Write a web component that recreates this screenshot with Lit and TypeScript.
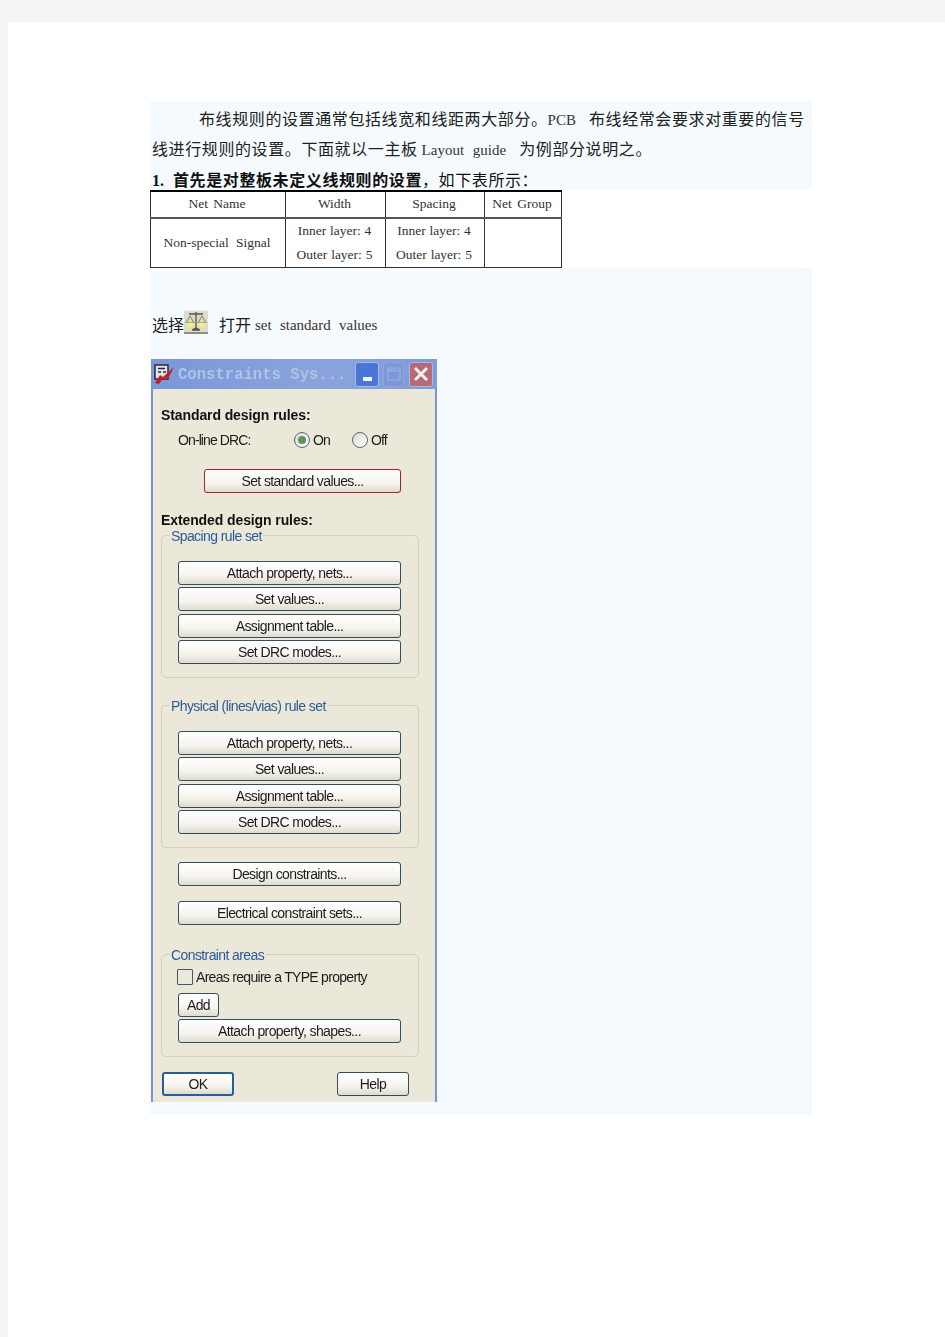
import { LitElement, html, css, svg } from "lit";
import { customElement } from "lit/decorators.js";

const ruleButtons = ["Attach property, nets...", "Set values...", "Assignment table...", "Set DRC modes..."];

@customElement("app-root")
export class AppRoot extends LitElement {
  static styles = css`
    :host { display: block; background: #f4f4f4; height: 1337px; padding: 22px 0 0 8px; box-sizing: border-box; overflow: hidden; }
    * { box-sizing: border-box; }
    .sheet { background: #fff; height: 1315px; padding: 79px 0 0 142px; font-family: "Liberation Serif", "Noto Sans CJK SC", serif; color: #222; }
    .blue { background: #f5faff; width: 662px; }
    .intro { height: 89px; padding: 4px 2px 0; }
    .line { height: 30px; line-height: 30px; font-size: 16px; letter-spacing: .6px; white-space: nowrap; }
    .line.first { padding-left: 47px; }
    .lat { font-size: 15px; letter-spacing: 0; word-spacing: 5px; color: #3a3230; }
    .gap-l { margin-left: 13px; }
    .lead { margin-left: 4px; }
    .heading { font-weight: 700; height: 29px; line-height: 31px; color: #111; }
    .heading b { display: inline-block; width: 21px; font-size: 16px; letter-spacing: 0; }
    .heading span { font-weight: 400; }
    table { border-collapse: collapse; width: 411px; height: 78px; table-layout: fixed; font-size: 13.5px; word-spacing: 2px; color: #333; border-top: 2px solid #000; }
    td { border: 1px solid #333; text-align: center; padding: 0; line-height: 24px; }
    tr.head { height: 25px; }
    tr.head td { border-bottom: 2px solid #555; padding: 0 2px 1px 0; }
    td.name { padding-right: 2px; word-spacing: 4px; }
    td.two { word-spacing: .5px; padding-right: 2px; }
    .after { height: 847px; padding: 42px 0 0 1px; }
    .choose { height: 49px; display: flex; align-items: flex-start; font-size: 16px; line-height: 31px; padding-left: 1px; }
    .choose svg { display: block; }
    .choose .open { margin-left: 11px; }
    .choose .lat { font-size: 15px; margin-left: 4px; word-spacing: 4.5px; }
    .dialog { width: 286px; height: 743px; background: #ebe8da; border-left: 2px solid #7b93cf; border-right: 2px solid #7b93cf; font-family: "Liberation Sans", sans-serif; color: #1c1c1c; filter: blur(.35px); }
    .title { height: 30px; margin: 0 -2px; background: linear-gradient(90deg, #7a97d8, #8aa3dc 60%, #7f9bd8); display: flex; align-items: center; padding-left: 3px; }
    .title .name { font-family: "Liberation Mono", monospace; font-size: 15.6px; line-height: 20px; padding-top: 1px; font-weight: 700; color: #afc3e6; margin-left: 3px; width: 177px; white-space: nowrap; }
    .wbtn { height: 25px; border-radius: 3px; border: 1px solid #a6b9e4; display: flex; align-items: center; justify-content: center; }
    .wbtn.min { width: 24px; background: #4a76d8; align-items: flex-end; padding-bottom: 5px; margin-right: 4px; }
    .wbtn.min i { display: block; width: 9px; height: 4px; background: #f4f6fb; }
    .wbtn.max { width: 21px; background: #7d97d8; border-color: #8ea5dd; margin-right: 5px; }
    .wbtn.close { width: 24px; background: #b56a76; }
    .body { padding: 17px 16px 0 8px; }
    h3 { margin: 0; font-size: 14px; line-height: 18px; font-weight: 700; color: #111; letter-spacing: -.1px; }
    .drc { display: flex; align-items: center; height: 18px; margin: 7px 0 0 17px; font-size: 14px; letter-spacing: -.9px; }
    .drc .lbl { width: 116px; }
    .radio { width: 16px; height: 16px; border-radius: 50%; border: 1.5px solid #4d6a83; background: linear-gradient(135deg, #dcd9cc, #fff); margin-right: 3px; display: flex; align-items: center; justify-content: center; }
    .radio i { width: 8px; height: 8px; border-radius: 50%; background: #5f9161; }
    .off { margin-left: 19px; }
    .opt { width: 20px; }
    button { display: block; height: 24px; padding: 0; border: 1.5px solid #31505f; border-radius: 3px; background: linear-gradient(#fff, #f6f4ee 60%, #dedbcf); font: 14px "Liberation Sans", sans-serif; letter-spacing: -.6px; color: #1c1c1c; white-space: nowrap; }
    button.std { width: 197px; margin: 20px 0 0 43px; border-color: #a8242e; box-shadow: 0 0 1px #e8a0a0; }
    button.wide { width: 223px; margin-left: 17px; }
    h3.ext { margin-top: 18px; }
    .group { position: relative; margin-top: 6px; height: 143px; border: 1px solid #d3d0c0; border-radius: 5px; padding-top: 25px; display: flex; flex-direction: column; gap: 2.33px; }
    .group button.wide { margin-left: 16px; }
    .group.second { margin-top: 27px; }
    .group.areas { margin-top: 29px; height: 103px; padding-top: 14px; gap: 0; }
    .legend { position: absolute; left: 8px; top: -8px; padding: 0 1px; background: #ebe8da; color: #2b5c98; font-size: 14px; line-height: 16px; letter-spacing: -.6px; white-space: nowrap; }
    button.design { margin-top: 14px; }
    button.electric { margin-top: 15px; }
    .check { display: flex; align-items: center; height: 16px; margin-left: 15px; font-size: 14px; letter-spacing: -.7px; }
    .box { width: 16px; height: 16px; border: 1.5px solid #3e5a72; border-radius: 1px; margin-right: 3px; background: #ece9dc; }
    button.add { width: 41px; margin: 8px 0 2px 16px; }
    .actions { display: flex; justify-content: space-between; margin: 15px 10px 0 1px; }
    .actions button { width: 72px; }
    .actions .ok { border-color: #2a5f96; border-width: 2px; }
  `;

  private scaleIcon() {
    return svg`<svg width="24" height="24" viewBox="0 0 24 24">
      <rect width="24" height="24" fill="#dedbc6"/>
      <rect y="22" width="24" height="2" fill="#8d8d80"/>
      <rect width="24" height="1" fill="#f2f1e6"/>
      <path d="M2 13L6 6l4 7zM14 13l4-7 4 7z" fill="none" stroke="#6a6a58" stroke-width=".8"/>
      <path d="M5 4h14M12 2v16M8 20l4-2 4 2z" stroke="#55554a" stroke-width="1.3" fill="#55554a"/>
      <path d="M2 13a4 4.5 0 0 0 8 0zM14 13a4 4.5 0 0 0 8 0z" fill="#eef088"/>
    </svg>`;
  }

  private logo() {
    return svg`<svg width="21" height="20" viewBox="0 0 21 20" style="display:block;flex:none">
      <rect x="1" y="1" width="13" height="14" fill="#e4e4ec" stroke="#2a2a36" stroke-width="1.5"/>
      <path d="M4 4.5h7M4 8h3M9 8h3" stroke="#2a2a36" stroke-width="1.5"/>
      <path d="M1 19l5-8 3 2 11-10-6 12-5-1-4 6z" fill="#c41e28"/>
    </svg>`;
  }

  private group(title: string, cls = "") {
    return html`<div class="group ${cls}">
      <span class="legend">${title}</span>
      ${ruleButtons.map((b) => html`<button class="wide">${b}</button>`)}
    </div>`;
  }

  render() {
    return html`<div class="sheet">
      <div class="blue intro">
        <div class="line first">布线规则的设置通常包括线宽和线距两大部分。<span class="lat">PCB</span><span class="gap-l">布线经常会要求对重要的信号</span></div>
        <div class="line">线进行规则的设置。下面就以一主板<span class="lat lead">Layout guide</span><span class="gap-l">为例部分说明之。</span></div>
        <div class="line heading"><b>1.</b>首先是对整板未定义线规则的设置<span>，如下表所示：</span></div>
      </div>
      <table>
        <colgroup><col style="width:135px"/><col style="width:100px"/><col style="width:99px"/><col style="width:77px"/></colgroup>
        <tr class="head"><td>Net Name</td><td>Width</td><td>Spacing</td><td>Net Group</td></tr>
        <tr><td class="name">Non-special Signal</td><td class="two">Inner layer: 4<br/>Outer layer: 5</td><td class="two">Inner layer: 4<br/>Outer layer: 5</td><td></td></tr>
      </table>
      <div class="blue after">
        <div class="choose">选择${this.scaleIcon()}<span class="open">打开</span><span class="lat">set standard values</span></div>
        <div class="dialog">
          <div class="title">
            ${this.logo()}
            <span class="name">Constraints Sys...</span>
            <span class="wbtn min"><i></i></span>
            <span class="wbtn max"><svg width="14" height="14" viewBox="0 0 14 14"><rect x="1" y="1" width="12" height="12" fill="none" stroke="#96abe0" stroke-width="1.4"/><path d="M1 3.5h12" stroke="#96abe0" stroke-width="2"/></svg></span>
            <span class="wbtn close"><svg width="16" height="16" viewBox="0 0 16 16"><path d="M2 2l12 12M14 2L2 14" stroke="#f6eef0" stroke-width="3"/></svg></span>
          </div>
          <div class="body">
            <h3>Standard design rules:</h3>
            <div class="drc">
              <span class="lbl">On-line DRC:</span>
              <span class="radio"><i></i></span><span class="opt">On</span>
              <span class="radio off"></span><span>Off</span>
            </div>
            <button class="std">Set standard values...</button>
            <h3 class="ext">Extended design rules:</h3>
            ${this.group("Spacing rule set")}
            ${this.group("Physical (lines/vias) rule set", "second")}
            <button class="wide design">Design constraints...</button>
            <button class="wide electric">Electrical constraint sets...</button>
            <div class="group areas">
              <span class="legend">Constraint areas</span>
              <div class="check"><span class="box"></span>Areas require a TYPE property</div>
              <button class="add">Add</button>
              <button class="wide attach">Attach property, shapes...</button>
            </div>
            <div class="actions"><button class="ok">OK</button><button>Help</button></div>
          </div>
        </div>
      </div>
    </div>`;
  }
}
